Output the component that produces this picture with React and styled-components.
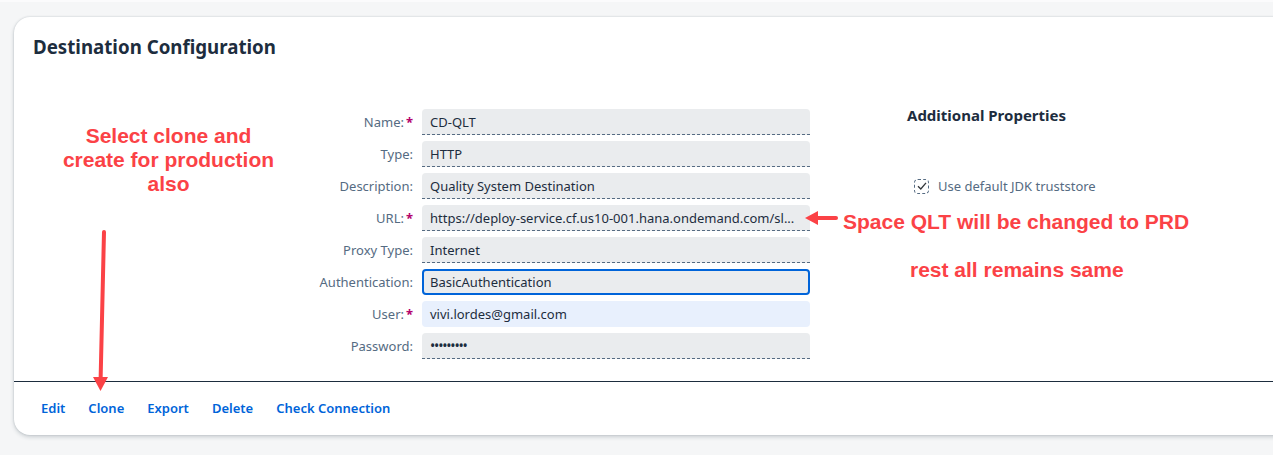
import styled, { createGlobalStyle } from 'styled-components';

const GlobalStyle = createGlobalStyle`
  html, body {
    margin: 0;
    padding: 0;
    background: #f5f6f7;
    overflow: hidden;
  }
  body {
    border-top: 2px solid #fbfbfc;
    font-family: 'Noto Sans', 'Open Sans', Arial, sans-serif;
  }
`;

const fields = [
  { label: 'Name', value: 'CD-QLT', required: true },
  { label: 'Type', value: 'HTTP' },
  { label: 'Description', value: 'Quality System Destination' },
  {
    label: 'URL',
    value: 'https://deploy-service.cf.us10-001.hana.ondemand.com/sl...',
    required: true,
  },
  { label: 'Proxy Type', value: 'Internet' },
  { label: 'Authentication', value: 'BasicAuthentication', variant: 'focused' },
  { label: 'User', value: 'vivi.lordes@gmail.com', required: true, variant: 'filled' },
  { label: 'Password', value: '•••••••••', variant: 'password' },
];

const actions = ['Edit', 'Clone', 'Export', 'Delete', 'Check Connection'];

export default function App() {
  return (
    <>
      <GlobalStyle />
      <Page>
        <Card>
          <Header>Destination Configuration</Header>
          <Body>
            <LeftNote>
              <Note>Select clone and create for production also</Note>
            </LeftNote>
            <Form>
              {fields.map((f) => (
                <Row key={f.label}>
                  <Label>
                    {f.label}:{f.required ? <Star>*</Star> : <StarGap />}
                  </Label>
                  <Field $variant={f.variant}>
                    <FieldText $variant={f.variant}>{f.value}</FieldText>
                  </Field>
                </Row>
              ))}
            </Form>
            <Side>
              <SideTitle>Additional Properties</SideTitle>
              <CheckRow>
                <CheckBox>
                  <svg width="12" height="12" viewBox="0 0 12 12">
                    <path d="M2 6.2 L4.8 9 L10 2.8" fill="none" stroke="#32363a" strokeWidth="1.3" />
                  </svg>
                </CheckBox>
                <CheckLabel>Use default JDK truststore</CheckLabel>
              </CheckRow>
              <Note $first>Space QLT will be changed to PRD</Note>
              <Note $indent>rest all remains same</Note>
            </Side>
          </Body>
          <Divider />
          <Footer>
            {actions.map((a) => (
              <Action key={a}>{a}</Action>
            ))}
          </Footer>
        </Card>
        <Arrows width="1273" height="455" viewBox="0 0 1273 455">
          <line x1="104" y1="230" x2="100.6" y2="378" stroke="#fb4246" strokeWidth="4" strokeLinecap="round" />
          <polygon points="93,375 108,375 100.5,389" fill="#fb4246" />
          <line x1="836" y1="216" x2="816" y2="216" stroke="#fb4246" strokeWidth="4" strokeLinecap="round" />
          <polygon points="818,209 818,223 805,216" fill="#fb4246" />
        </Arrows>
      </Page>
    </>
  );
}

const Page = styled.div`
  position: relative;
  width: 1273px;
  height: 453px;
  padding-top: 15px;
  box-sizing: border-box;
`;

const Card = styled.div`
  display: flex;
  flex-direction: column;
  margin-left: 14px;
  width: 1290px;
  height: 418px;
  background: #fff;
  border-radius: 16px;
  box-shadow: 0 0 2px rgba(34, 53, 72, 0.2), 0 2px 4px rgba(34, 53, 72, 0.2);
  box-sizing: border-box;
`;

const Header = styled.h1`
  margin: 0;
  padding: 18px 19px 0;
  font-size: 18.7px;
  line-height: 24px;
  font-weight: 700;
  color: #1d2d3e;
`;

const Body = styled.div`
  display: flex;
  flex: 1;
  padding-top: 50px;
`;

const LeftNote = styled.div`
  width: 269px;
  padding-left: 20px;
  padding-top: 15px;
  box-sizing: content-box;
  display: flex;
  justify-content: center;
  align-items: flex-start;
`;

const Note = styled.div`
  font-family: 'Liberation Sans', Arial, sans-serif;
  font-weight: 700;
  font-size: 21px;
  line-height: 24px;
  color: #fb4246;
  width: ${(p) => (p.$first || p.$indent ? 'auto' : '222px')};
  white-space: ${(p) => (p.$first || p.$indent ? 'nowrap' : 'normal')};
  margin-top: ${(p) => (p.$first ? '14px' : p.$indent ? '24px' : '0')};
  padding-left: ${(p) => (p.$indent ? '67px' : '0')};
  text-align: ${(p) => (p.$first || p.$indent ? 'left' : 'center')};
`;

const Form = styled.div`
  display: flex;
  flex-direction: column;
  gap: 6px;
`;

const Row = styled.div`
  display: grid;
  grid-template-columns: 110px 388px;
  column-gap: 9px;
  align-items: center;
`;

const Label = styled.div`
  display: flex;
  justify-content: flex-end;
  align-items: center;
  font-size: 13px;
  color: #556b82;
  white-space: nowrap;
`;

const Star = styled.span`
  color: #b4006c;
  font-weight: 700;
  width: 9px;
  padding-left: 2px;
  box-sizing: border-box;
`;

const StarGap = styled.span`
  width: 0;
`;

const Field = styled.div`
  height: 26px;
  display: flex;
  align-items: center;
  padding: 0 8px;
  box-sizing: border-box;
  background: ${(p) => (p.$variant === 'filled' ? '#e8f0fd' : '#eaecee')};
  border-radius: ${(p) => (p.$variant === 'filled' || p.$variant === 'focused' ? '4px' : '4px 4px 0 0')};
  border-bottom: ${(p) => (p.$variant === 'filled' ? 'none' : '1px dashed #556b82')};
  ${(p) =>
    p.$variant === 'focused' &&
    `
    border: 2px solid #0064d9;
    padding: 0 6px;
  `}
`;

const FieldText = styled.span`
  font-size: ${(p) => (p.$variant === 'password' ? '14px' : '13px')};
  letter-spacing: ${(p) => (p.$variant === 'password' ? '-1.2px' : '0')};
  color: #1d2d3e;
  white-space: nowrap;
`;

const Side = styled.div`
  display: flex;
  flex-direction: column;
  padding-left: 33px;
`;

const SideTitle = styled.div`
  margin-top: -3px;
  padding-left: 64px;
  font-size: 15px;
  line-height: 18px;
  font-weight: 700;
  color: #1d2d3e;
`;

const CheckRow = styled.div`
  display: flex;
  align-items: center;
  gap: 9px;
  margin-top: 52px;
  padding-left: 71px;
  height: 20px;
`;

const CheckBox = styled.div`
  width: 15px;
  height: 15px;
  border: 1px dashed #556b82;
  border-radius: 4px;
  display: flex;
  align-items: center;
  justify-content: center;
  box-sizing: border-box;
`;

const CheckLabel = styled.span`
  font-size: 13px;
  color: #556b82;
`;

const Divider = styled.div`
  height: 1px;
  background: #1d2d3e;
`;

const Footer = styled.div`
  display: flex;
  gap: 23px;
  padding: 17px 27px 18px;
`;

const Action = styled.span`
  font-size: 13px;
  line-height: 18px;
  font-weight: 600;
  color: #0064d9;
`;

const Arrows = styled.svg`
  position: absolute;
  top: 0;
  left: 0;
  pointer-events: none;
`;
